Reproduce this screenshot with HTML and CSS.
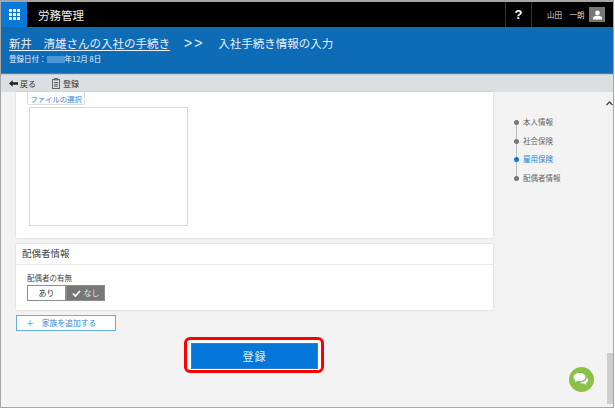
FILE: index.html
```html
<!DOCTYPE html>
<html lang="ja">
<head>
<meta charset="utf-8">
<title>労務管理</title>
<link rel="stylesheet" href="styles.css">
</head>
<body>
<div class="window">
  <header class="topbar">
    <div class="apps">
      <svg width="11" height="11" viewBox="0 0 13 13" fill="#fff"><rect x="0" y="0" width="3.4" height="3.4"/><rect x="4.8" y="0" width="3.4" height="3.4"/><rect x="9.6" y="0" width="3.4" height="3.4"/><rect x="0" y="4.8" width="3.4" height="3.4"/><rect x="4.8" y="4.8" width="3.4" height="3.4"/><rect x="9.6" y="4.8" width="3.4" height="3.4"/><rect x="0" y="9.6" width="3.4" height="3.4"/><rect x="4.8" y="9.6" width="3.4" height="3.4"/><rect x="9.6" y="9.6" width="3.4" height="3.4"/></svg>
    </div>
    <div class="app-title">労務管理</div>
    <div class="help">?</div>
    <div class="user">
      <span class="user-name">山田　一朗</span>
      <span class="avatar">
        <svg width="16" height="14" viewBox="0 0 16 14" fill="#fff"><circle cx="8" cy="4" r="3.4"/><path d="M1.5 13.5v-2.2c0-1.600 2.600-2.800 4.200-3.100h4.600c1.600.3 4.200 1.500 4.200 3.100v2.200z"/></svg>
      </span>
    </div>
  </header>
  <section class="banner">
    <div class="crumbs">
      <a class="crumb-link">新井　清雄さんの入社の手続き</a>
      <span class="crumb-sep">&gt;&gt;</span>
      <span>入社手続き情報の入力</span>
    </div>
    <div class="reg-date">登録日付：<span class="mask"></span>年12月 8日</div>
  </section>
  <nav class="toolbar">
    <span class="tool">
      <svg width="9" height="7" viewBox="0 0 11 8" fill="#222"><path d="M0 4 4.400 0v2.600H11v2.800H4.400V8z"/></svg>戻る
    </span>
    <span class="tool tool-save">
      <svg width="8" height="11" viewBox="0 0 8 11"><rect x=".5" y="1.500" width="7" height="9" fill="none" stroke="#666"/><rect x="2.200" y="0" width="3.600" height="2.400" fill="#666"/><path d="M2 4.500h4M2 6.300h4M2 8.100h4" stroke="#666"/></svg>登録
    </span>
  </nav>
  <div class="body">
    <main class="content">
      <div class="card card-file">
        <button class="file-btn">ファイルの選択</button>
        <div class="preview"></div>
      </div>
      <div class="card card-spouse">
        <h2 class="card-title">配偶者情報</h2>
        <div class="card-body">
          <div class="field-label">配偶者の有無</div>
          <div class="toggle">
            <span class="opt">あり</span>
            <span class="opt opt-on">
              <svg width="9" height="7" viewBox="0 0 9 7"><path d="M1 3.500 3.400 6 8 1" fill="none" stroke="#fff" stroke-width="1.800"/></svg>なし
            </span>
          </div>
        </div>
      </div>
      <button class="add-family"><span class="plus">＋</span>家族を追加する</button>
      <div class="submit-row">
        <div class="highlight"><button class="submit">登録</button></div>
      </div>
    </main>
    <aside class="steps">
      <div class="step">本人情報</div>
      <div class="step">社会保険</div>
      <div class="step step-active">雇用保険</div>
      <div class="step">配偶者情報</div>
    </aside>
    <div class="scrollbar">
      <svg class="scroll-up" width="7" height="5" viewBox="0 0 7 5"><path d="M.5 4 3.500 1 6.500 4" fill="none" stroke="#444" stroke-width="1.300"/></svg>
      <div class="thumb"></div>
    </div>
    <div class="chat">
      <svg width="17" height="15" viewBox="0 0 17 15" fill="#fff"><path d="M6.500 1C3 1 .5 2.700.5 5c0 1.300.8 2.400 2 3.100L2 10l2.500-1.200c.6.1 1.300.2 2 .2 3.500 0 6-1.700 6-4s-2.500-4-6-4z"/><path d="M13.700 5.500c.1 2.600-2.600 4.700-6.200 4.700l-.6.1c.8.800 2 1.200 3.400 1.200l.9-.1 2.300 1.600-.4-2.100c1.200-.6 2-1.600 2-2.700 0-1.200-.8-2.200-1.400-2.700z"/></svg>
    </div>
  </div>
</div>
</body>
</html>
```
FILE: styles.css
```css
* { box-sizing: border-box; }
html, body { margin: 0; padding: 0; }
body {
  width: 615px;
  height: 408px;
  background: #fff;
  font-family: "Noto Sans CJK JP", "Noto Sans", sans-serif;
  overflow: hidden;
}
.window {
  width: 614px;
  height: 408px;
  border: 1px solid #a6a6a6;
  border-top-width: 2px;
  display: flex;
  flex-direction: column;
  overflow: hidden;
}
.topbar {
  height: 25px;
  background: #000;
  display: flex;
  align-items: center;
  color: #fff;
  flex: none;
}
.apps {
  width: 26px;
  height: 25px;
  background: #0b78d6;
  display: flex;
  align-items: center;
  justify-content: center;
}
.app-title {
  margin-left: 11px;
  font-size: 11.500px;
  color: #eee;
  flex: 1;
}
.help {
  width: 27px;
  height: 25px;
  border-left: 1px solid #333;
  border-right: 1px solid #333;
  text-align: center;
  font: bold 13px/26px "Liberation Sans", sans-serif;
}
.user {
  display: flex;
  align-items: center;
  width: 81px;
  padding-left: 15px;
}
.user-name { font-size: 7.500px; color: #ddd; width: 42px; white-space: nowrap; }
.avatar {
  width: 16px;
  height: 15px;
  background: #777;
  display: flex;
  align-items: center;
  justify-content: center;
}
.avatar svg { width: 11px; height: 10px; }
.banner {
  height: 47px;
  background: #0e6cb7;
  color: #e8f1f9;
  padding: 8px 8px 0;
  flex: none;
  border-bottom: 1px solid #2f86cc;
}
.crumbs {
  font-size: 11.500px;
  line-height: 17px;
  display: flex;
  white-space: nowrap;
}
.crumb-link { text-decoration: underline; text-underline-offset: 2px; }
.crumb-sep { margin: 0 14px; font-size: 14px; letter-spacing: 2px; font-family: "Liberation Sans", sans-serif; }
.reg-date { font-size: 7.500px; line-height: 10px; margin-top: 2px; white-space: nowrap; }
.mask {
  display: inline-block;
  width: 18px;
  height: 7px;
  background: #4d97d6;
  vertical-align: -1px;
}
.toolbar {
  height: 18px;
  background: #dbdfdf;
  border-top: 1px solid #c6caca;
  display: flex;
  align-items: center;
  padding-left: 8px;
  font-size: 8px;
  color: #333;
  flex: none;
}
.tool { display: inline-flex; align-items: center; gap: 2px; }
.tool-save { margin-left: 16px; gap: 3px; }
.body {
  flex: 1;
  min-height: 0;
  display: flex;
  background: #f3f3f3;
  position: relative;
}
.content { width: 492px; padding-left: 15px; flex: none; }
.card {
  background: #fff;
  width: 477px;
  box-shadow: 0 0 2px rgba(0, 0, 0, .16);
  margin-bottom: 6px;
}
.card-file { height: 146px; padding-left: 11px; }
.file-btn {
  display: block;
  height: 13px;
  width: 58px;
  padding: 0;
  background: #fff;
  border: 1px solid #ddd;
  border-top: 0;
  border-radius: 0 0 2px 2px;
  color: #2f86d6;
  font: 7.400px/11px "Noto Sans CJK JP", sans-serif;
  white-space: nowrap;
}
.preview {
  width: 159px;
  height: 119px;
  margin: 2px 0 0 2px;
  border: 1px solid #d9d9d9;
}
.card-spouse { height: 66px; margin-bottom: 5px; }
.card-title {
  margin: 0;
  height: 21px;
  padding-left: 6px;
  font: 400 9.500px/19px "Noto Sans CJK JP", sans-serif;
  color: #444;
  border-bottom: 1px solid #e8e8e8;
}
.card-body { padding: 7px 11px 0; }
.field-label { font-size: 7.500px; line-height: 11px; color: #444; }
.toggle { display: flex; margin-top: 2px; }
.opt {
  width: 39px;
  height: 16px;
  border: 1px solid #8d8d8d;
  font-size: 8px;
  line-height: 14px;
  color: #333;
  text-align: center;
  background: #fff;
}
.opt-on {
  background: #777;
  color: #e5e5e5;
  display: flex;
  align-items: center;
  justify-content: center;
  gap: 3px;
}
.add-family {
  display: flex;
  align-items: center;
  width: 100px;
  height: 16px;
  padding: 0 0 0 9px;
  background: #fff;
  border: 1px solid #66ade8;
  color: #2f86d6;
  font: 7.800px/14px "Noto Sans CJK JP", sans-serif;
}
.plus { margin-right: 8px; }
.submit-row { display: flex; padding: 6px 0 0 168px; }
.highlight {
  width: 140px;
  height: 36px;
  border: 3px solid #ff0000;
  border-radius: 6px;
  padding: 3px 3px 1px 4px;
  background: #fff;
  display: flex;
}
.submit {
  flex: 1;
  border: 1px solid #1c84dc;
  padding: 0;
  background: #0476d9;
  color: #e3f0fb;
  font: 11px/1 "Noto Sans CJK JP", sans-serif;
  letter-spacing: 1px;
}
.steps { padding: 21px 0 0 22px; flex: 1; }
.step {
  position: relative;
  height: 18.500px;
  padding-left: 8px;
  font-size: 7.500px;
  line-height: 18px;
  color: #666;
  white-space: nowrap;
}
.step::before {
  content: "";
  position: absolute;
  left: -1px;
  top: 7px;
  width: 5px;
  height: 5px;
  border-radius: 50%;
  background: #777;
}
.step:not(:last-child)::after {
  content: "";
  position: absolute;
  left: 1px;
  top: 12px;
  width: 1px;
  height: 14px;
  background: #bbb;
}
.step-active { color: #2f86d6; }
.step-active::before { background: #0b78d6; }
.scrollbar { width: 6px; flex: none; position: relative; background: #f1f1f1; }
.scroll-up { position: absolute; left: -1px; top: 9px; }
.thumb {
  position: absolute;
  left: 0;
  right: 0;
  bottom: 3px;
  height: 51px;
  background: #cdcdcd;
}
.chat {
  position: absolute;
  left: 568px;
  top: 275px;
  width: 25px;
  height: 25px;
  border-radius: 50%;
  background: #8bc145;
  display: flex;
  align-items: center;
  justify-content: center;
}
```
